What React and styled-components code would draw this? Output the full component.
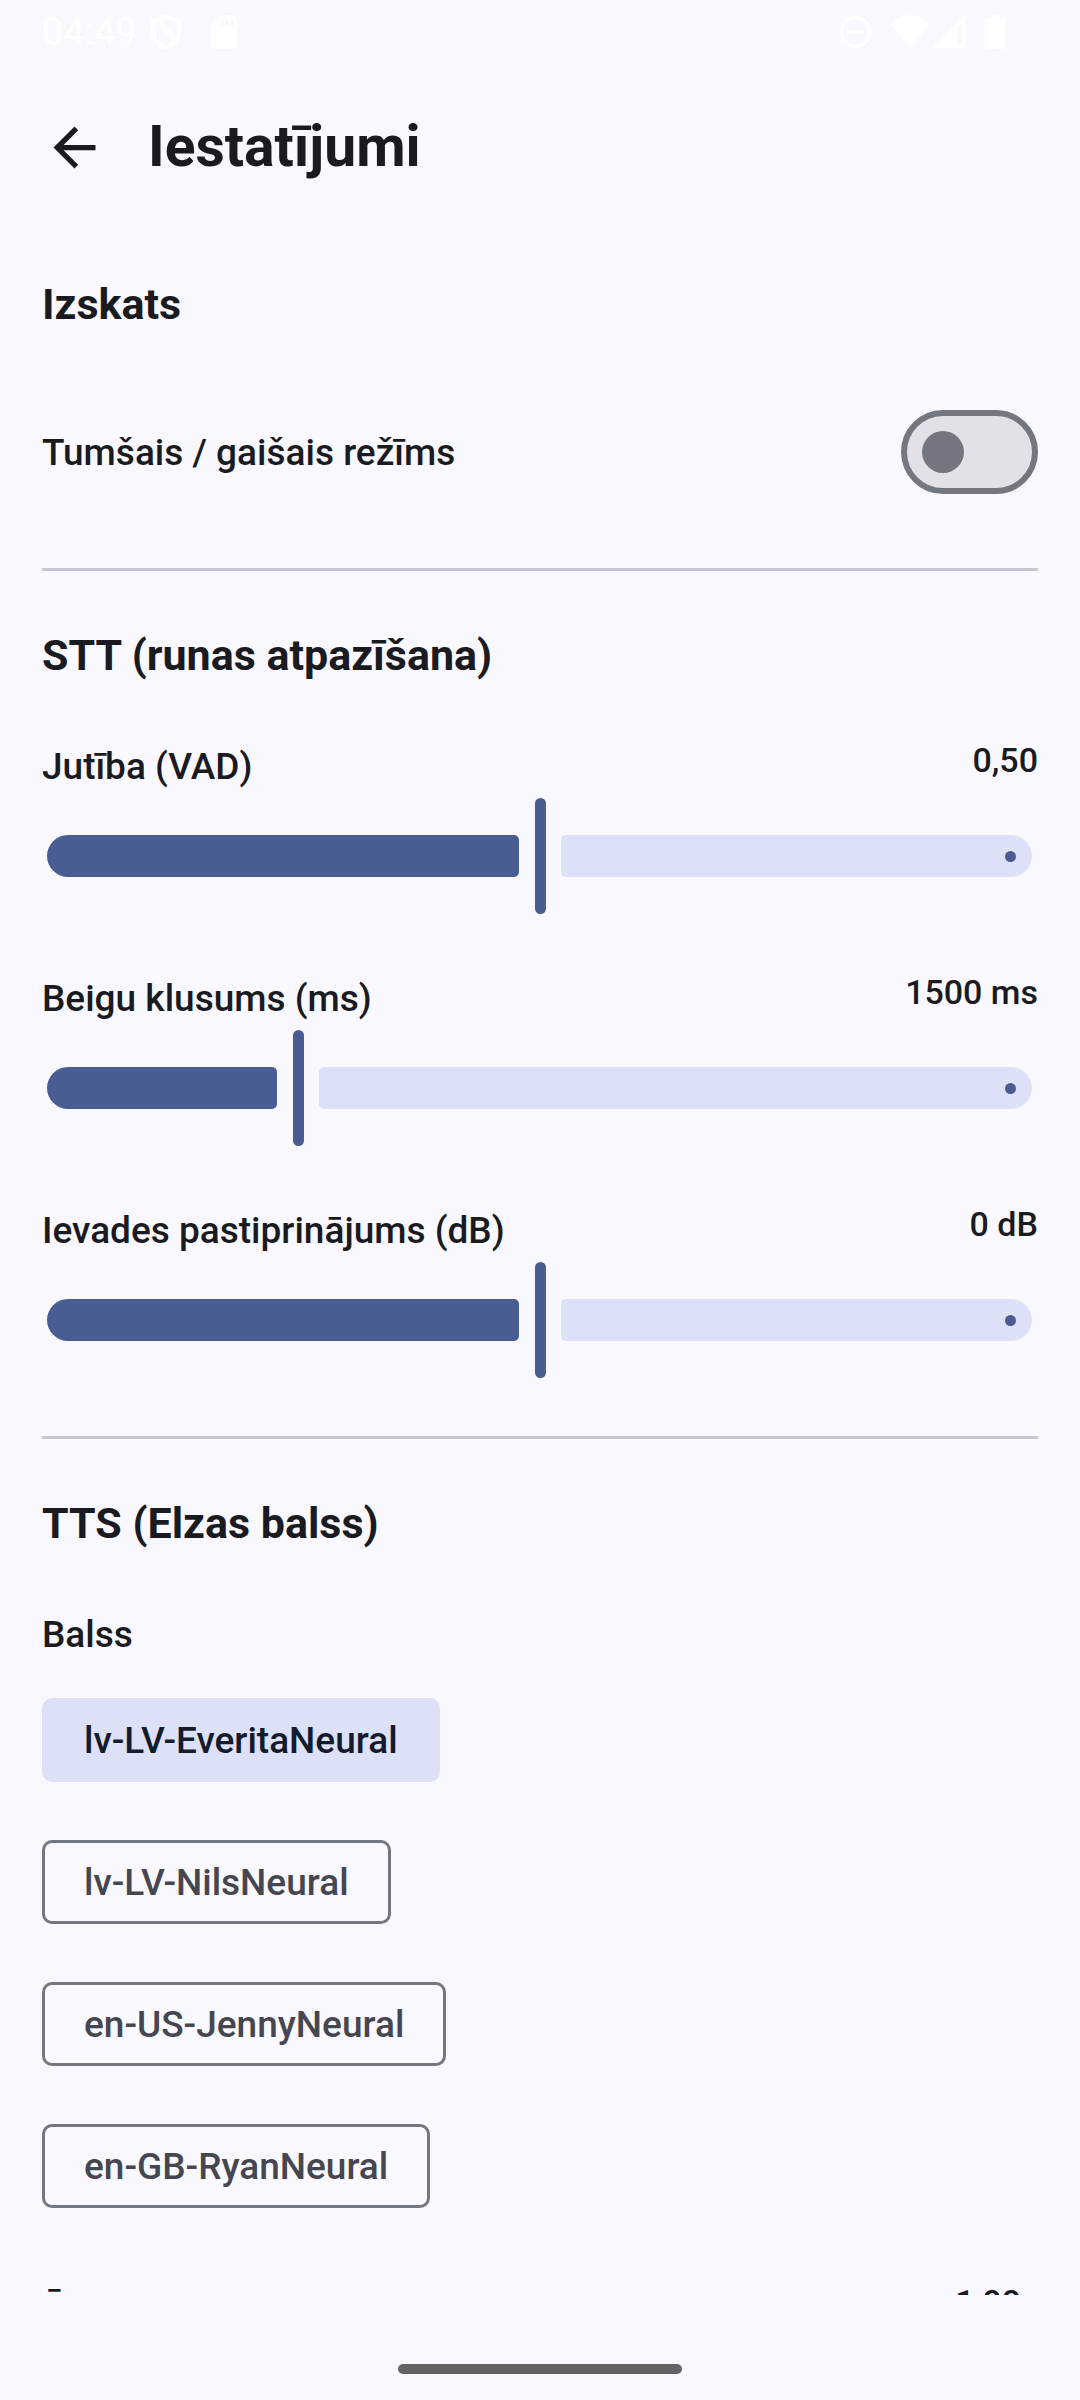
import React, { useId, useState } from "react";
import styled, { createGlobalStyle } from "styled-components";

const color = {
  surface: "#faf8ff",
  onSurface: "#1a1b21",
  onSurfaceVariant: "#45464f",
  primary: "#495d92",
  container: "#dde1f7",
  onContainer: "#141b2c",
  outline: "#757780",
  outlineVariant: "#c5c6d0",
  highest: "#e2e1e8",
};

const GlobalStyle = createGlobalStyle`
  *, *::before, *::after { box-sizing: border-box; }
  body {
    margin: 0;
    background: ${color.surface};
    color: ${color.onSurface};
    font-family: Roboto, "Noto Sans", sans-serif;
  }
`;

const Screen = styled.div`
  display: flex;
  flex-direction: column;
  height: 100vh;
`;

const StatusBar = styled.div`
  display: flex;
  flex: none;
  align-items: center;
  justify-content: space-between;
  height: 63px;
  padding: 0 75px 0 42px;
  color: #ffffff;
`;

const StatusGroup = styled.div`
  display: flex;
  align-items: center;
  gap: ${(p) => p.$gap}px;
`;

const Clock = styled.span`
  font-size: 38px;
  line-height: 42px;
`;

const TopBar = styled.header`
  display: flex;
  flex: none;
  align-items: center;
  gap: 11px;
  height: 168px;
  padding: 0 11px;
`;

const BackButton = styled.button`
  display: grid;
  place-items: center;
  width: 126px;
  height: 126px;
  padding: 0;
  border: 0;
  border-radius: 50%;
  background: none;
  color: inherit;
`;

const Title = styled.h1`
  margin: 0;
  font-size: 57px;
  line-height: 74px;
  font-weight: 700;
`;

const Content = styled.main`
  flex: 1;
  min-height: 0;
  overflow-y: auto;
  scrollbar-width: none;
  display: flex;
  flex-direction: column;
  padding: 42px;

  > * { flex: none; }
`;

const Section = styled.section`
  display: flex;
  flex-direction: column;
  gap: 53px;
`;

const SectionTitle = styled.h2`
  margin: 0;
  font-size: 43px;
  line-height: 63px;
  font-weight: 700;
`;

const Divider = styled.hr`
  width: 100%;
  height: 3px;
  margin: 53px 0;
  border: 0;
  background: ${color.outlineVariant};
`;

const Row = styled.div`
  display: flex;
  align-items: ${(p) => (p.$center ? "center" : "flex-start")};
  justify-content: space-between;
  min-height: ${(p) => (p.$center ? 126 : 53)}px;
`;

const Label = styled.label`
  font-size: 37px;
  line-height: 53px;
  font-weight: 500;
`;

const Value = styled.output`
  font-size: 34px;
  line-height: 40px;
  font-weight: 500;
`;

const Switch = styled.input`
  appearance: none;
  display: flex;
  align-items: center;
  width: 137px;
  height: 84px;
  margin: 0;
  padding: 0 15px;
  border: 6px solid ${color.outline};
  border-radius: 42px;
  background: ${color.highest};

  &::before {
    content: "";
    width: 42px;
    height: 42px;
    border-radius: 50%;
    background: ${color.outline};
  }

  &:checked {
    justify-content: flex-end;
    border-color: ${color.primary};
    background: ${color.primary};
  }

  &:checked::before { background: #ffffff; }
`;

const SliderBox = styled.div`
  display: grid;
  align-items: center;
  height: 126px;

  > * { grid-area: 1 / 1; }
`;

const Track = styled.div`
  display: flex;
  gap: 42px;
  height: 42px;
  padding: 0 6px 0 5px;
`;

const ActiveTrack = styled.div`
  flex: none;
  border-radius: 21px 5px 5px 21px;
  background: ${color.primary};
`;

const InactiveTrack = styled.div`
  display: flex;
  flex: 1;
  align-items: center;
  justify-content: flex-end;
  padding-right: 16px;
  border-radius: 5px 21px 21px 5px;
  background: ${color.container};

  &::after {
    content: "";
    width: 11px;
    height: 11px;
    border-radius: 50%;
    background: ${color.primary};
  }
`;

const Range = styled.input`
  appearance: none;
  width: 100%;
  height: 126px;
  margin: 0;
  background: transparent;

  &::-webkit-slider-thumb {
    appearance: none;
    width: 11px;
    height: 116px;
    border-radius: 6px;
    background: ${color.primary};
  }

  &::-moz-range-thumb {
    width: 11px;
    height: 116px;
    border: 0;
    border-radius: 6px;
    background: ${color.primary};
  }
`;

const Voices = styled.div`
  display: flex;
  flex-direction: column;
  align-items: flex-start;
  gap: 58px;
  margin: 37px 0 74px;
`;

const VoiceTitle = styled.h3`
  margin: 53px 0 0;
  font-size: 37px;
  line-height: 53px;
  font-weight: 500;
`;

const Chip = styled.button`
  height: 84px;
  padding: 0 39px;
  border: 3px solid ${(p) => (p.$selected ? color.container : color.outline)};
  border-radius: 10px;
  background: ${(p) => (p.$selected ? color.container : "transparent")};
  color: ${(p) => (p.$selected ? color.onContainer : color.onSurfaceVariant)};
  font-family: inherit;
  font-size: 37px;
  line-height: 53px;
  font-weight: 500;
`;

const NavigationBar = styled.div`
  display: flex;
  flex: none;
  align-items: flex-end;
  justify-content: center;
  height: 105px;
  padding-bottom: 26px;
`;

const Handle = styled.div`
  width: 284px;
  height: 10px;
  border-radius: 5px;
  background: #646466;
`;

const ShieldIcon = () => (
  <svg width="30" height="36" viewBox="0 0 30 36" fill="none" stroke="currentColor" strokeWidth="4" aria-hidden="true">
    <path d="M15 2.500 28 7v10c0 8-5 13.500-13 17C7 30.500 2 25 2 17V7z" strokeLinejoin="round" />
    <path d="M10 4.500c-1 6 1 9 5 12s8 5 6.500 11" />
  </svg>
);

const CardIcon = () => (
  <svg width="26" height="34" viewBox="0 0 26 34" aria-hidden="true">
    <path
      fill="currentColor"
      fillRule="evenodd"
      d="M10.500 0H23a3 3 0 0 1 3 3v28a3 3 0 0 1-3 3H3a3 3 0 0 1-3-3V11zM10 5v6h3V5zm5 0v6h3V5zm5 0v6h3V5z"
    />
  </svg>
);

const DoNotDisturbIcon = () => (
  <svg width="33" height="34" viewBox="0 0 33 34" fill="none" stroke="currentColor" aria-hidden="true">
    <circle cx="16.500" cy="17" r="14.500" strokeWidth="3.500" />
    <path d="M10 17h13" strokeWidth="4" strokeLinecap="round" />
  </svg>
);

const WifiIcon = () => (
  <svg width="39" height="34" viewBox="0 0 39 34" fill="currentColor" aria-hidden="true">
    <path d="M19.500 33 0 9.500C11-3 28-3 39 9.500z" />
  </svg>
);

const SignalIcon = () => (
  <svg width="33" height="34" viewBox="0 0 33 34" aria-hidden="true">
    <path fill="currentColor" fillRule="evenodd" d="M33 0v33H0zM24.500 12.500V30H29V8z" />
  </svg>
);

const BatteryIcon = () => (
  <svg width="20" height="34" viewBox="0 0 20 34" fill="currentColor" aria-hidden="true">
    <path d="M6 0h8v3.500h4a2 2 0 0 1 2 2V32a2 2 0 0 1-2 2H2a2 2 0 0 1-2-2V5.500a2 2 0 0 1 2-2h4z" />
  </svg>
);

const ArrowIcon = () => (
  <svg width="63" height="63" viewBox="0 0 24 24" fill="currentColor" aria-hidden="true">
    <path d="M20 11H7.830l5.590-5.590L12 4l-8 8 8 8 1.410-1.410L7.830 13H20z" />
  </svg>
);

function SliderSetting({ label, min, max, step, initial, format }) {
  const id = useId();
  const [value, setValue] = useState(initial);
  const percent = ((value - min) / (max - min)) * 100;

  return (
    <div>
      <Row>
        <Label htmlFor={id}>{label}</Label>
        <Value htmlFor={id}>{format(value)}</Value>
      </Row>
      <SliderBox>
        <Track>
          <ActiveTrack style={{ width: `max(0px, calc(${percent}% - 21px))` }} />
          <InactiveTrack />
        </Track>
        <Range
          id={id}
          type="range"
          min={min}
          max={max}
          step={step}
          value={value}
          onChange={(event) => setValue(Number(event.target.value))}
        />
      </SliderBox>
    </div>
  );
}

const decimal = (value) => value.toFixed(2).replace(".", ",");
const voices = ["lv-LV-EveritaNeural", "lv-LV-NilsNeural", "en-US-JennyNeural", "en-GB-RyanNeural"];

export default function App() {
  const [dark, setDark] = useState(false);
  const [voice, setVoice] = useState(voices[0]);

  return (
    <>
      <GlobalStyle />
      <Screen>
        <StatusBar>
          <StatusGroup $gap={14}>
            <Clock>04:49</Clock>
            <StatusGroup $gap={30}>
              <ShieldIcon />
              <CardIcon />
            </StatusGroup>
          </StatusGroup>
          <StatusGroup $gap={19}>
            <DoNotDisturbIcon />
            <StatusGroup $gap={3}>
              <WifiIcon />
              <SignalIcon />
            </StatusGroup>
            <BatteryIcon />
          </StatusGroup>
        </StatusBar>
        <TopBar>
          <BackButton type="button" aria-label="Atpakaļ">
            <ArrowIcon />
          </BackButton>
          <Title>Iestatījumi</Title>
        </TopBar>
        <Content>
          <Section>
            <SectionTitle>Izskats</SectionTitle>
            <Row $center>
              <Label htmlFor="dark-mode">Tumšais / gaišais režīms</Label>
              <Switch
                id="dark-mode"
                type="checkbox"
                role="switch"
                checked={dark}
                onChange={(event) => setDark(event.target.checked)}
              />
            </Row>
          </Section>
          <Divider />
          <Section>
            <SectionTitle>STT (runas atpazīšana)</SectionTitle>
            <SliderSetting label="Jutība (VAD)" min={0} max={1} step={0.01} initial={0.5} format={decimal} />
            <SliderSetting
              label="Beigu klusums (ms)"
              min={300}
              max={5000}
              step={100}
              initial={1500}
              format={(value) => `${value} ms`}
            />
            <SliderSetting
              label="Ievades pastiprinājums (dB)"
              min={-20}
              max={20}
              step={1}
              initial={0}
              format={(value) => `${value} dB`}
            />
          </Section>
          <Divider />
          <section>
            <SectionTitle>TTS (Elzas balss)</SectionTitle>
            <VoiceTitle>Balss</VoiceTitle>
            <Voices>
              {voices.map((name) => (
                <Chip
                  key={name}
                  type="button"
                  $selected={name === voice}
                  aria-pressed={name === voice}
                  onClick={() => setVoice(name)}
                >
                  {name}
                </Chip>
              ))}
            </Voices>
            <SliderSetting
              label="Ātrums"
              min={0.5}
              max={2}
              step={0.05}
              initial={1}
              format={(value) => `${decimal(value)}x`}
            />
          </section>
        </Content>
        <NavigationBar>
          <Handle />
        </NavigationBar>
      </Screen>
    </>
  );
}
